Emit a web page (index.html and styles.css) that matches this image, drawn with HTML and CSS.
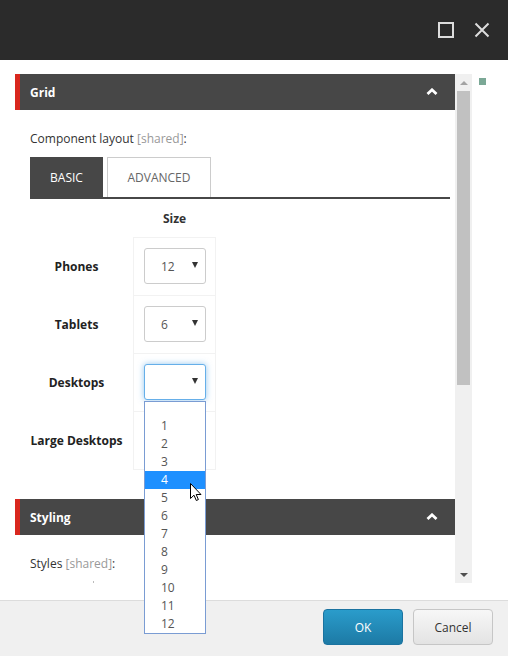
FILE: index.html
```html
<!DOCTYPE html>
<html>
<head>
<meta charset="utf-8">
<link rel="stylesheet" href="styles.css">
</head>
<body>
<div class="dialog">
  <div class="titlebar">
    <span class="ico-max"></span>
    <svg class="ico-close" width="16" height="16" viewBox="0 0 16 16"><path d="M1.5 1.5 L14.5 14.5 M14.5 1.5 L1.5 14.5" stroke="#dddddd" stroke-width="2" fill="none"/></svg>
  </div>
  <div class="main">
    <div class="scroll">
      <div class="content">
        <div class="sec-head">
          <span class="sec-title">Grid</span>
          <svg class="chev" width="12" height="7" viewBox="0 0 12 7"><path d="M1.5 6 L6 1.8 L10.5 6" stroke="#fff" stroke-width="2.8" fill="none"/></svg>
        </div>
        <div class="sec-body">
          <div class="field-label">Component layout <span class="shared">[shared]</span>:</div>
          <div class="tabs">
            <div class="tab active">BASIC</div>
            <div class="tab">ADVANCED</div>
          </div>
          <div class="grid-table">
            <div class="gt-label"></div>
            <div class="gt-head">Size</div>
            <div class="gt-label">Phones</div>
            <div class="gt-cell"><div class="sel"><span>12</span><i class="arr"></i></div></div>
            <div class="gt-label">Tablets</div>
            <div class="gt-cell"><div class="sel"><span>6</span><i class="arr"></i></div></div>
            <div class="gt-label">Desktops</div>
            <div class="gt-cell"><div class="sel focus"><span></span><i class="arr"></i></div></div>
            <div class="gt-label">Large Desktops</div>
            <div class="gt-cell last"><div class="sel"><span></span><i class="arr"></i></div></div>
          </div>
        </div>
        <div class="sec-head styling">
          <span class="sec-title">Styling</span>
          <svg class="chev" width="12" height="7" viewBox="0 0 12 7"><path d="M1.5 6 L6 1.8 L10.5 6" stroke="#fff" stroke-width="2.8" fill="none"/></svg>
        </div>
        <div class="sec-body">
          <div class="field-label">Styles <span class="shared">[shared]</span>:</div>
          <div class="dot"></div>
        </div>
      </div>
      <div class="scrollbar">
        <i class="sb-up"></i>
        <div class="sb-thumb"></div>
        <i class="sb-down"></i>
      </div>
      <div class="green"></div>
    </div>
  </div>
  <div class="footer">
    <button class="btn ok">OK</button>
    <button class="btn cancel">Cancel</button>
  </div>
</div>

<ul class="dropdown">
  <li class="blank"></li>
  <li>1</li><li>2</li><li>3</li><li class="hl">4</li><li>5</li><li>6</li><li>7</li><li>8</li><li>9</li><li>10</li><li>11</li><li>12</li>
</ul>
<svg class="cursor" width="12" height="19" viewBox="0 0 12 19"><path d="M0.5 0.5 L0.5 15.5 L4 12.2 L6.3 17.5 L8.4 16.6 L6.2 11.5 L11 11.5 Z" fill="#fff" stroke="#000" stroke-width="1" stroke-linejoin="miter"/></svg>
</body>
</html>
```
FILE: styles.css
```css
* { box-sizing: border-box; }
html, body { margin: 0; padding: 0; }
body {
  font-family: "Open Sans", "Liberation Sans", sans-serif;
  font-size: 12px;
  color: #333;
  background: #fff;
  width: 508px;
  height: 656px;
  overflow: hidden;
  position: relative;
}
.dialog {
  display: flex;
  flex-direction: column;
  height: 656px;
}
.titlebar {
  height: 60px;
  background: #2b2b2b;
  display: flex;
  align-items: center;
  justify-content: flex-end;
  padding-right: 18px;
  gap: 20px;
  flex-shrink: 0;
}
.ico-max {
  display: block;
  width: 16px;
  height: 16px;
  border: 2px solid #dddddd;
}
.ico-close { display: block; }

.main {
  flex: 1;
  padding: 14px 0 0 15px;
}
.scroll {
  display: flex;
  align-items: flex-start;
}
.content {
  width: 440px;
  height: 509px;
  overflow: hidden;
}
.sec-head {
  height: 36px;
  background: #474747;
  border-left: 5px solid #d9271e;
  display: flex;
  align-items: center;
  justify-content: space-between;
  padding: 0 17px 0 10px;
}
.sec-title {
  color: #fff;
  font-weight: bold;
  font-size: 12px;
}
.chev { display: block; margin-top: -2px; }
.sec-body {
  padding: 20px 5px 0 15px;
}
.field-label {
  line-height: 17px;
  color: #333;
}
.shared { color: #999; }
.tabs {
  display: flex;
  gap: 4px;
  margin-top: 10px;
  border-bottom: 2px solid #474747;
}
.tab {
  height: 40px;
  display: flex;
  align-items: center;
  justify-content: center;
  border: 1px solid #cccccc;
  border-bottom: none;
  width: 104px;
  color: #666;
  background: #fff;
}
.tab.active {
  width: 73px;
  background: #474747;
  border-color: #474747;
  color: #fff;
}
.grid-table {
  display: grid;
  grid-template-columns: 93px 83px;
  column-gap: 10px;
  margin-bottom: 29px;
}
.gt-head {
  height: 38px;
  display: flex;
  align-items: center;
  justify-content: center;
  font-weight: bold;
  padding-top: 1px;
}
.gt-label {
  display: flex;
  align-items: center;
  justify-content: center;
  font-weight: bold;
  color: #222;
  white-space: nowrap;
}
.gt-cell {
  height: 58px;
  border: 1px solid #f2f2f2;
  border-bottom: none;
  padding: 10px 9px 0 10px;
}
.gt-cell.last { border-bottom: 1px solid #f2f2f2; height: 59px; }
.sel {
  width: 62px;
  height: 36px;
  border: 1px solid #cccccc;
  border-radius: 3px;
  display: flex;
  align-items: center;
  justify-content: space-between;
  padding: 0 7px 0 16px;
  color: #555;
  background: #fff;
}
.sel.focus {
  border-color: #66afe9;
  box-shadow: 0 0 6px rgba(102,175,233,.7);
}
.arr {
  display: block;
  width: 0;
  height: 0;
  border-left: 3px solid transparent;
  border-right: 3px solid transparent;
  border-top: 6px solid #333;
  margin-top: -2px;
}
.dot {
  width: 1px;
  height: 2px;
  background: #bbb;
  margin: 9px 0 0 63px;
}

.scrollbar {
  width: 17px;
  height: 509px;
  background: #f0f0f0;
  display: flex;
  flex-direction: column;
  align-items: center;
  padding-top: 7px;
}
.sb-up {
  display: block;
  width: 0; height: 0;
  border-left: 4px solid transparent;
  border-right: 4px solid transparent;
  border-bottom: 4px solid #a3a3a3;
}
.sb-thumb {
  width: 13px;
  height: 294px;
  background: #c1c1c1;
  margin-top: 6px;
}
.sb-down {
  display: block;
  width: 0; height: 0;
  border-left: 4px solid transparent;
  border-right: 4px solid transparent;
  border-top: 4px solid #505050;
  margin-top: 188px;
}
.green {
  width: 7px;
  height: 7px;
  background: #7ba896;
  margin: 4px 0 0 7px;
}

.footer {
  height: 56px;
  flex-shrink: 0;
  background: #f0f0f0;
  border-top: 1px solid #dcdcdc;
  display: flex;
  justify-content: flex-end;
  align-items: flex-start;
  gap: 10px;
  padding: 8px 15px 0 0;
}
.btn {
  width: 80px;
  height: 36px;
  border-radius: 4px;
  font-family: "Open Sans", "Liberation Sans", sans-serif;
  font-size: 12px;
}
.btn.ok {
  background: linear-gradient(#2a9ccb, #1d7aa5);
  border: 1px solid #1b73a0;
  color: #fff;
}
.btn.cancel {
  background: linear-gradient(#f7f7f7, #e3e3e3);
  border: 1px solid #c6c6c6;
  color: #333;
}

.dropdown {
  position: absolute;
  left: 144px;
  top: 401px;
  width: 62px;
  margin: 0;
  padding: 0;
  list-style: none;
  background: #fff;
  border: 1px solid #7a9cd3;
  font-size: 12px;
  color: #555;
}
.dropdown li {
  height: 18px;
  line-height: 18px;
  padding-left: 16px;
}
.dropdown li.blank { height: 15px; }
.dropdown li.hl {
  background: #1e90ff;
  color: #fff;
}
.cursor {
  position: absolute;
  left: 190px;
  top: 483px;
}
```
